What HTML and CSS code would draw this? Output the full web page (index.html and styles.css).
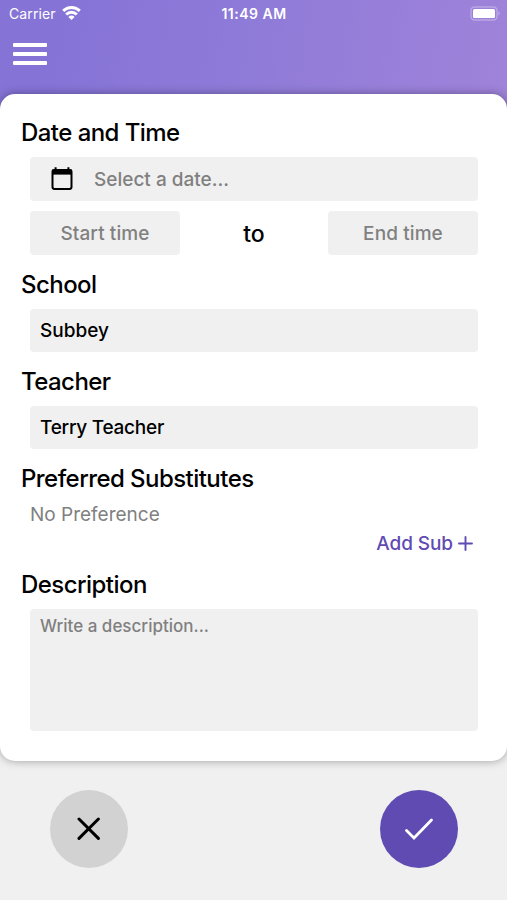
FILE: index.html
```html
<!DOCTYPE html>
<html lang="en">
<head>
  <meta charset="UTF-8" />
  <meta name="viewport" content="width=device-width, initial-scale=1.0" />
  <title>New Request</title>
  <link rel="stylesheet" href="styles.css">
</head>
<body>

  <header>
    <div class="status-bar">
      <div class="carrier">
        <span>Carrier</span>
        <svg width="19" height="14" viewBox="0 0 19 14" fill="none" stroke="#fff" stroke-width="2.9">
          <path d="M1.2 4.9 A11.8 11.8 0 0 1 17.8 4.9" />
          <path d="M4.2 8.5 A7.5 7.5 0 0 1 14.8 8.5" />
          <path d="M9.5 14 L6.4 10.9 A4.3 4.3 0 0 1 12.6 10.9 Z" fill="#fff" stroke="none" />
        </svg>
      </div>
      <div class="clock">11:49 AM</div>
      <div class="battery">
        <svg width="31" height="15" viewBox="0 0 31 15">
          <rect x="1" y="1" width="26" height="13" rx="3.5" fill="none" stroke="#fff" stroke-opacity="0.3" stroke-width="1.4" />
          <rect x="3" y="3" width="22" height="9" rx="1.5" fill="#fff" />
          <path d="M28.6 5.3 Q30.6 7.5 28.6 9.7 Z" fill="#fff" fill-opacity="0.45" />
        </svg>
      </div>
    </div>
    <button class="menu-btn" aria-label="Menu">
      <span></span>
      <span></span>
      <span></span>
    </button>
  </header>

  <form class="card">
    <h2>Date and Time</h2>
    <div class="field date">
      <svg width="24" height="26" viewBox="0 0 24 26">
        <path d="M5.6 1.2v3M18.4 1.2v3" stroke="#000" stroke-width="2" />
        <rect x="2.5" y="4.1" width="19" height="18.8" rx="1.8" fill="none" stroke="#000" stroke-width="2" />
        <rect x="2" y="3.6" width="20" height="5" fill="#000" />
      </svg>
      <span>Select a date...</span>
    </div>
    <div class="times">
      <div class="field time">Start time</div>
      <div class="to">to</div>
      <div class="field time">End time</div>
    </div>

    <h2>School</h2>
    <div class="field value">Subbey</div>

    <h2>Teacher</h2>
    <div class="field value name">Terry Teacher</div>

    <h2>Preferred Substitutes</h2>
    <p class="none">No Preference</p>
    <a class="add-sub" href="#">
      <span>Add Sub</span>
      <svg width="15" height="15" viewBox="0 0 15 15" stroke="#5f4bb2" stroke-width="1.9" stroke-linecap="round">
        <path d="M7.5 1v13M1 7.5h13" />
      </svg>
    </a>

    <h2>Description</h2>
    <div class="field textarea">Write a description...</div>
  </form>

  <div class="actions">
    <button class="cancel" aria-label="Cancel">
      <svg width="24" height="24" viewBox="0 0 24 24" fill="none" stroke="#000" stroke-width="3" stroke-linecap="round">
        <path d="M2 2l19.4 19.4M21.4 2L2 21.4" />
      </svg>
    </button>
    <button class="confirm" aria-label="Confirm">
      <svg width="30" height="24" viewBox="0 0 30 24" fill="none" stroke="#fff" stroke-width="2.8" stroke-linecap="round">
        <path d="M2.5 13.5l7.5 7.5L27.5 3" />
      </svg>
    </button>
  </div>

</body>
</html>
```
FILE: styles.css
```css
* {
  box-sizing: border-box;
}

body {
  font-family: Inter, "Liberation Sans", sans-serif;
  margin: 0;
  min-height: 900px;
  background: linear-gradient(100deg, #8573d6 10%, #8f7bd8 50%, #a083da 100%) no-repeat 0 0 / 100% 130px #f0f0f0;
}

header {
  height: 94px;
  color: #fff;
}

.status-bar {
  display: grid;
  grid-template-columns: 1fr auto 1fr;
  align-items: center;
  height: 27px;
  padding: 0 6px 0 9px;
  font-size: 14px;
}

.carrier {
  display: flex;
  align-items: center;
  gap: 6px;
  letter-spacing: 0.1px;
}

.carrier svg {
  margin-top: -1px;
}

.clock {
  font-weight: 600;
  font-size: 14px;
  letter-spacing: 0.5px;
  margin-right: 2px;
}

.battery {
  display: flex;
  justify-content: flex-end;
}

.menu-btn {
  display: flex;
  flex-direction: column;
  gap: 5px;
  margin: 16px 0 0 13px;
  padding: 0;
  border: none;
  background: none;
}

.menu-btn span {
  width: 34px;
  height: 4px;
  border-radius: 1px;
  background: #fff;
}

.card {
  height: 667px;
  padding: 25px 29px 0 30px;
  background: #fff;
  border-radius: 15px;
  box-shadow: 0 0 10px rgba(0, 0, 0, 0.35);
}

h2 {
  margin: 16px 0 10px -9px;
  font-size: 24px;
  font-weight: 500;
  letter-spacing: -0.55px;
  line-height: 28px;
}

.card h2:first-child {
  margin-top: 0;
}

.field {
  display: flex;
  align-items: center;
  height: 43px;
  background: #f0f0f0;
  border-radius: 4px;
  font-size: 19px;
  font-weight: 500;
}

.date {
  height: 44px;
  padding-left: 20px;
  gap: 20px;
  color: #808080;
}

.times {
  display: flex;
  justify-content: space-between;
  align-items: center;
  margin-top: 10px;
}

.time {
  justify-content: center;
  width: 150px;
  height: 44px;
  letter-spacing: 0.1px;
  color: #808080;
}

.to {
  padding-top: 2px;
  font-size: 23px;
  font-weight: 500;
}

.value {
  padding: 0 0 0 10px;
}

.name {
  letter-spacing: -0.25px;
}

.none {
  margin: 0;
  font-size: 19px;
  line-height: 24px;
  color: #808080;
}

.add-sub {
  display: flex;
  justify-content: flex-end;
  align-items: center;
  gap: 5px;
  margin-top: 5px;
  padding-right: 5px;
  height: 23px;
  font-size: 19px;
  font-weight: 500;
  letter-spacing: -0.1px;
  line-height: 24px;
  color: #5f4bb2;
  text-decoration: none;
}

.textarea {
  align-items: flex-start;
  height: 122px;
  padding: 7px 10px;
  font-size: 17px;
  color: #808080;
}

.actions {
  display: flex;
  justify-content: space-between;
  padding: 29px 49px 0 50px;
}

.actions button {
  display: flex;
  justify-content: center;
  align-items: center;
  width: 78px;
  height: 78px;
  padding: 0;
  border: none;
  border-radius: 50%;
}

.actions .cancel {
  background: #d2d2d2;
}

.actions .confirm {
  background: #5f4bb2;
}
```
